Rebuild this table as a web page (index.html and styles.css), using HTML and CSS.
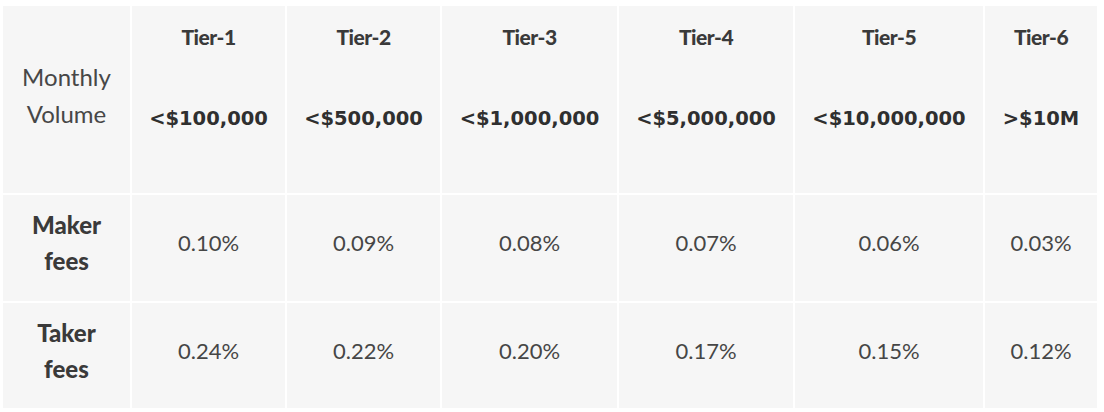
FILE: index.html
```html
<!DOCTYPE html>
<html lang="en">
<head>
<meta charset="utf-8">
<title>Fee tiers</title>
<link rel="stylesheet" href="styles.css">
</head>
<body>
<div class="fees">
  <div class="cell head label"><span>Monthly<br>Volume</span></div>
  <div class="cell head tier"><span class="tier-name">Tier-1</span><span class="tier-vol">&lt;$100,000</span></div>
  <div class="cell head tier"><span class="tier-name">Tier-2</span><span class="tier-vol">&lt;$500,000</span></div>
  <div class="cell head tier"><span class="tier-name">Tier-3</span><span class="tier-vol">&lt;$1,000,000</span></div>
  <div class="cell head tier"><span class="tier-name">Tier-4</span><span class="tier-vol">&lt;$5,000,000</span></div>
  <div class="cell head tier"><span class="tier-name">Tier-5</span><span class="tier-vol">&lt;$10,000,000</span></div>
  <div class="cell head tier"><span class="tier-name">Tier-6</span><span class="tier-vol">&gt;$10M</span></div>

  <div class="cell rowhead">Maker<br>fees</div>
  <div class="cell val">0.10%</div>
  <div class="cell val">0.09%</div>
  <div class="cell val">0.08%</div>
  <div class="cell val">0.07%</div>
  <div class="cell val">0.06%</div>
  <div class="cell val">0.03%</div>

  <div class="cell rowhead">Taker<br>fees</div>
  <div class="cell val">0.24%</div>
  <div class="cell val">0.22%</div>
  <div class="cell val">0.20%</div>
  <div class="cell val">0.17%</div>
  <div class="cell val">0.15%</div>
  <div class="cell val">0.12%</div>
</div>
</body>
</html>
```

FILE: styles.css
```css
html, body {
  margin: 0;
  padding: 0;
  background: #ffffff;
}

body {
  padding: 6px 0 0 3px;
  font-family: Lato, "Noto Sans", sans-serif;
  color: #3a3a3a;
}

.fees {
  display: grid;
  grid-template-columns: 127px 153px 153px 175px 174px 188px 112px;
  grid-template-rows: 187px 106px 105px;
  gap: 2px;
  width: 1094px;
  background: #ffffff;
}

.cell {
  background: #f6f6f6;
  display: flex;
  flex-direction: column;
  align-items: center;
  justify-content: center;
  text-align: center;
  box-sizing: border-box;
}

.label {
  font-size: 24px;
  line-height: 37px;
  color: #474747;
  padding-bottom: 9px;
}

.tier {
  justify-content: flex-start;
  padding-top: 18px;
}

.tier-name {
  font-weight: 900;
  font-size: 21px;
  line-height: 25px;
  letter-spacing: -0.5px;
  color: #3a3a3a;
}

.tier-vol {
  margin-top: 58px;
  font-family: "DejaVu Sans", Verdana, sans-serif;
  font-weight: 700;
  font-size: 19.5px;
  line-height: 23px;
  color: #2f2f2f;
}

.rowhead {
  font-weight: 900;
  font-size: 24px;
  line-height: 36px;
  color: #3a3a3a;
  padding-bottom: 10px;
}

.val {
  font-size: 22px;
  line-height: 26px;
  color: #464646;
  padding-bottom: 10px;
}
```
